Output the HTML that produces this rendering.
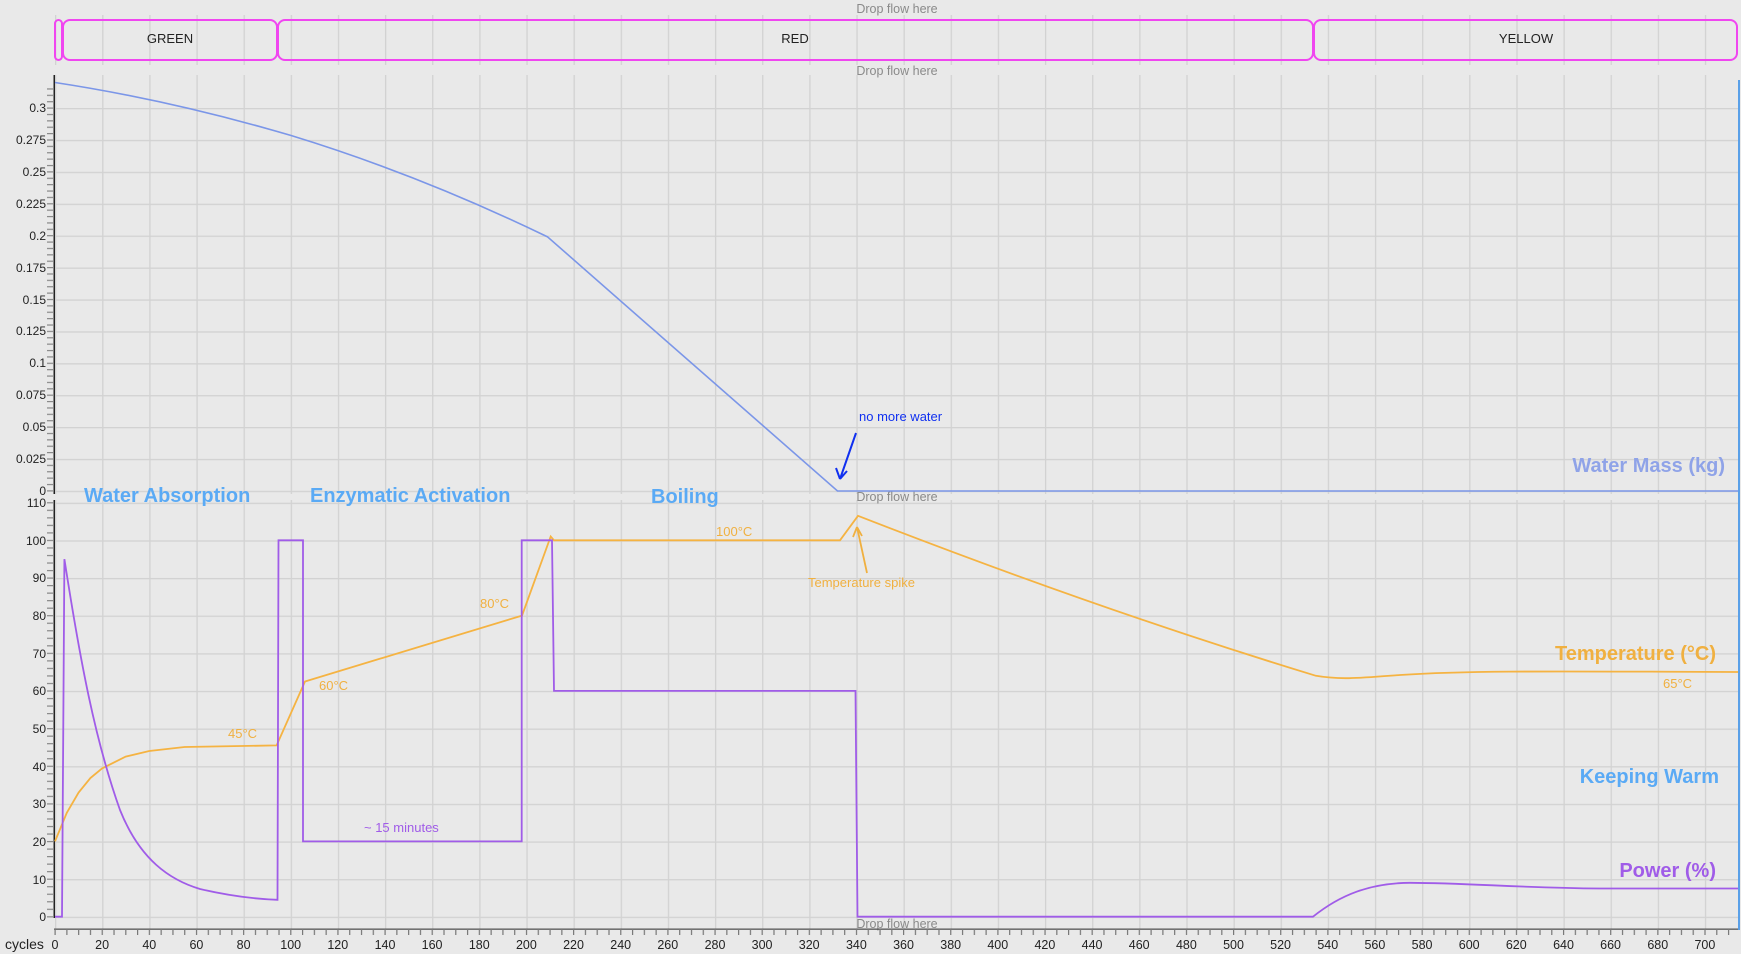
<!DOCTYPE html>
<html><head><meta charset="utf-8"><style>
html,body{margin:0;padding:0;background:#e9e9e9;width:1741px;height:954px;overflow:hidden}
svg{display:block;font-family:"Liberation Sans",sans-serif}
</style></head><body>
<svg width="1741" height="954" viewBox="0 0 1741 954">
<defs>
<pattern id="vg" x="55" y="0" width="47.14" height="10" patternUnits="userSpaceOnUse"><rect x="0" y="0" width="1.3" height="10" fill="#d2d2d2"/></pattern>
<pattern id="hgU" x="0" y="108" width="20" height="31.9" patternUnits="userSpaceOnUse"><rect x="0" y="0" width="20" height="1.3" fill="#d2d2d2"/></pattern>
<pattern id="hgL" x="0" y="502.7" width="20" height="37.64" patternUnits="userSpaceOnUse"><rect x="0" y="0" width="20" height="1.3" fill="#d2d2d2"/></pattern>
<pattern id="xt" x="54.5" y="929" width="11.785" height="10" patternUnits="userSpaceOnUse"><rect x="0" y="0" width="1.2" height="6" fill="#777"/></pattern>
<pattern id="ytU" x="0" y="107.5" width="10" height="6.38" patternUnits="userSpaceOnUse"><rect x="0" y="0" width="10" height="1.2" fill="#888"/></pattern>
<pattern id="ytL" x="0" y="502.2" width="10" height="7.528" patternUnits="userSpaceOnUse"><rect x="0" y="0" width="10" height="1.2" fill="#888"/></pattern>
</defs>
<rect x="55" y="15" width="1684" height="50" fill="url(#vg)"/>
<rect x="55" y="75" width="1684" height="419" fill="url(#vg)"/>
<rect x="55" y="500" width="1684" height="429" fill="url(#vg)"/>
<rect x="55" y="100" width="1684" height="394" fill="url(#hgU)"/>
<rect x="55" y="500" width="1684" height="420" fill="url(#hgL)"/>
<g fill="#8a8a8a" font-size="12.5" text-anchor="middle">
<text x="897" y="13">Drop flow here</text>
<text x="897" y="75">Drop flow here</text>
<text x="897" y="501">Drop flow here</text>
<text x="897" y="928">Drop flow here</text>
</g>
<g fill="none" stroke="#f046f0" stroke-width="2">
<rect x="55" y="20" width="7" height="40" rx="3.5"/>
<rect x="63" y="20" width="214" height="40" rx="7"/>
<rect x="278" y="20" width="1035" height="40" rx="7"/>
<rect x="1314" y="20" width="423" height="40" rx="7"/>
</g>
<g fill="#222" font-size="13" text-anchor="middle">
<text x="170" y="43">GREEN</text><text x="795" y="43">RED</text><text x="1526" y="43">YELLOW</text>
</g>
<rect x="53.5" y="75" width="1.5" height="419" fill="#222"/>
<rect x="53.5" y="500" width="1.5" height="418" fill="#222"/>
<rect x="47" y="84" width="6" height="410" fill="url(#ytU)"/>
<rect x="47" y="502" width="6" height="416" fill="url(#ytL)"/>
<rect x="54" y="928.5" width="1685" height="1.3" fill="#555"/>
<rect x="54" y="929" width="1685" height="7" fill="url(#xt)"/>
<g fill="#222" font-size="12" text-anchor="end">
<text x="46" y="112">0.3</text><text x="46" y="144">0.275</text><text x="46" y="176">0.25</text><text x="46" y="208">0.225</text><text x="46" y="240">0.2</text><text x="46" y="272">0.175</text><text x="46" y="304">0.15</text><text x="46" y="335">0.125</text><text x="46" y="367">0.1</text><text x="46" y="399">0.075</text><text x="46" y="431">0.05</text><text x="46" y="463">0.025</text><text x="46" y="495">0</text>
<text x="46" y="507">110</text><text x="46" y="545">100</text><text x="46" y="582">90</text><text x="46" y="620">80</text><text x="46" y="658">70</text><text x="46" y="695">60</text><text x="46" y="733">50</text><text x="46" y="771">40</text><text x="46" y="808">30</text><text x="46" y="846">20</text><text x="46" y="884">10</text><text x="46" y="921">0</text>
</g>
<g fill="#222" font-size="12.5" text-anchor="middle">
<text x="55" y="949">0</text><text x="102.1" y="949">20</text><text x="149.3" y="949">40</text><text x="196.4" y="949">60</text><text x="243.6" y="949">80</text><text x="290.7" y="949">100</text><text x="337.8" y="949">120</text><text x="385" y="949">140</text><text x="432.1" y="949">160</text><text x="479.3" y="949">180</text><text x="526.4" y="949">200</text><text x="573.5" y="949">220</text><text x="620.7" y="949">240</text><text x="667.8" y="949">260</text><text x="715" y="949">280</text><text x="762.1" y="949">300</text><text x="809.2" y="949">320</text><text x="856.4" y="949">340</text><text x="903.5" y="949">360</text><text x="950.7" y="949">380</text><text x="997.8" y="949">400</text><text x="1044.9" y="949">420</text><text x="1092.1" y="949">440</text><text x="1139.2" y="949">460</text><text x="1186.4" y="949">480</text><text x="1233.5" y="949">500</text><text x="1280.6" y="949">520</text><text x="1327.8" y="949">540</text><text x="1374.9" y="949">560</text><text x="1422.1" y="949">580</text><text x="1469.2" y="949">600</text><text x="1516.3" y="949">620</text><text x="1563.5" y="949">640</text><text x="1610.6" y="949">660</text><text x="1657.8" y="949">680</text><text x="1704.9" y="949">700</text>
</g>
<text x="5" y="949" font-size="14" fill="#222">cycles</text>
<rect x="1738" y="80" width="2" height="850" fill="#5aa0e8"/>
<path d="M55,82.5 Q170,100 290.7,135.4 Q420,175 547.6,236.9 L837.5,491 L1738,491" fill="none" stroke="#7b96e8" stroke-width="1.6"/>
<path d="M55,841.4 L66.8,812.8 L78.6,792.5 L90.4,778 L102.1,768.4 L125.7,756.6 L149.3,751 L184.6,747 L276.6,745.4 L305,681.5 L522,615.6 L550.7,536.5 L554,540.3 L840,540.3 L858,515.8 Q1100,610 1316,675.8 C1340,680 1360,678 1400,675 C1460,671 1520,671 1738,672" fill="none" stroke="#f5b342" stroke-width="1.8"/>
<path d="M55,916.7 L62,916.7 L64.4,559.1 C80,660 95,740 120,810 C140,860 170,880 200,889 C230,896 255,899 277.5,899.8 L278.5,540.3 L303,540.3 L303,841.4 L521.7,841.4 L521.7,540.3 L552,540.3 L554,690.9 L855.5,690.9 L857.5,916.7 L1313,916.7 C1340,895 1370,883 1410,882.8 C1470,883 1520,888 1600,888.5 L1738,888.5" fill="none" stroke="#a05ce8" stroke-width="1.8"/>
<g font-size="13">
<text x="859" y="421" fill="#1030f0">no more water</text>
<text x="808" y="587" fill="#f0b040">Temperature spike</text>
<text x="228" y="738" fill="#f0b040">45°C</text>
<text x="319" y="690" fill="#f0b040">60°C</text>
<text x="480" y="608" fill="#f0b040">80°C</text>
<text x="716" y="536" fill="#f0b040">100°C</text>
<text x="1663" y="688" fill="#f0b040">65°C</text>
<text x="364" y="832" fill="#a05ce8">~ 15 minutes</text>
</g>
<path d="M856,433 L840,479 M840,479 L836,468 M840,479 L847,471" fill="none" stroke="#1030f0" stroke-width="2"/>
<path d="M867,573 L857,527 M857,527 L853,537 M857,527 L862,536" fill="none" stroke="#f0b040" stroke-width="1.8"/>
<g font-size="20" font-weight="bold">
<text x="84" y="502" fill="#5aaaf5">Water Absorption</text>
<text x="310" y="502" fill="#5aaaf5">Enzymatic Activation</text>
<text x="651" y="503" fill="#5aaaf5">Boiling</text>
<text x="1719" y="783" fill="#5aaaf5" text-anchor="end">Keeping Warm</text>
<text x="1725" y="472" fill="#8fa3e8" text-anchor="end">Water Mass (kg)</text>
<text x="1716" y="660" fill="#f0b040" text-anchor="end">Temperature (°C)</text>
<text x="1716" y="877" fill="#a05ce8" text-anchor="end">Power (%)</text>
</g>
</svg>
</body></html>
